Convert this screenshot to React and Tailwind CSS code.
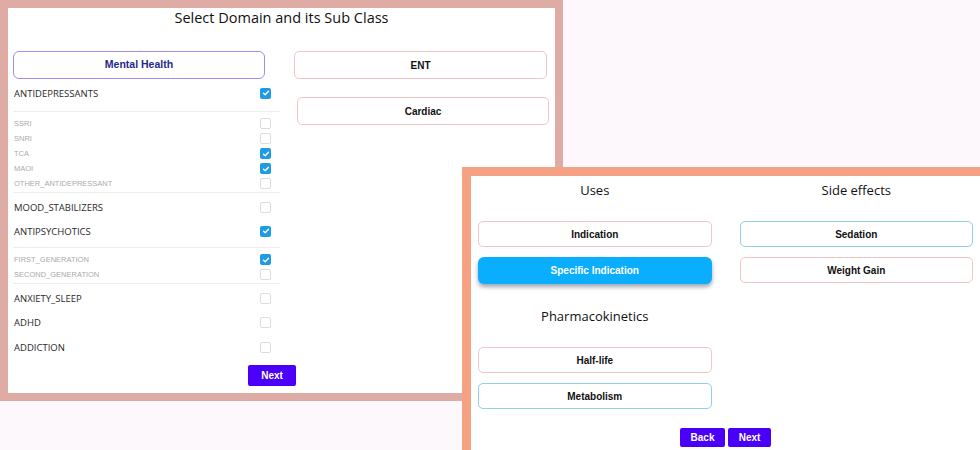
import React from "react";

const sans = { fontFamily: '"Open Sans", "Noto Sans", sans-serif' };

const antidepressants = [
  { name: "SSRI", on: false },
  { name: "SNRI", on: false },
  { name: "TCA", on: true },
  { name: "MAOI", on: true },
  { name: "OTHER_ANTIDEPRESSANT", on: false },
];

const antipsychotics = [
  { name: "FIRST_GENERATION", on: true },
  { name: "SECOND_GENERATION", on: false },
];

function Check({ on }) {
  if (!on) {
    return <span className="block w-[11px] h-[11px] rounded-[2px] border border-[#dcdcdc] bg-white" />;
  }
  return (
    <span className="flex w-[11px] h-[11px] rounded-[2px] bg-[#1d9be6] items-center justify-center">
      <svg width="8" height="8" viewBox="0 0 8 8">
        <path d="M1.5 4.2 L3.2 5.8 L6.5 2.2" fill="none" stroke="white" strokeWidth="1.4" strokeLinecap="round" strokeLinejoin="round" />
      </svg>
    </span>
  );
}

function MainRow({ label, on }) {
  return (
    <div className="flex items-center justify-between h-[24px] pl-[1px] pr-[9px]">
      <span className="text-[9.5px] text-[#2a2a2a] pt-[2px]" style={sans}>{label}</span>
      <Check on={on} />
    </div>
  );
}

function SubGroup({ items }) {
  return (
    <div className="border-y border-[#eeeeee] pt-[4px] pb-[1px]">
      {items.map((it) => (
        <div key={it.name} className="flex items-center justify-between h-[15px] pl-[1px] pr-[9px]">
          <span className="text-[7.5px] text-[#aaaaaa] font-['Liberation_Sans',Arial,sans-serif]">{it.name}</span>
          <Check on={it.on} />
        </div>
      ))}
    </div>
  );
}

function Outline({ children, tone, className = "" }) {
  const border = tone === "blue" ? "border-[#8fd0ec]" : "border-[#f5c4c6]";
  return (
    <div
      className={`flex items-center justify-center rounded-[5px] border bg-white text-[10px] font-bold text-[#111] font-['Liberation_Sans',Arial,sans-serif] ${border} ${className}`}
    >
      {children}
    </div>
  );
}

function DomainPanel() {
  return (
    <div className="absolute left-0 top-0 w-[563px] h-[401px] border-[8px] border-[#dfaca5] bg-white">
      <div className="h-[35px] flex items-start justify-center">
        <h1 className="text-[14.5px] leading-[20px] text-[#111]" style={sans}>Select Domain and its Sub Class</h1>
      </div>
      <div className="flex pl-[5px] mt-[8px]">
        {/* left column: selected domain with its sub classes */}
        <div className="w-[267px] shrink-0">
          <div className="h-[28px] w-[252px] rounded-[6px] border border-[#a48af0] flex items-center justify-center text-[10.5px] font-bold text-[#1e2a8c] font-['Liberation_Sans',Arial,sans-serif]">
            Mental Health
          </div>
          <div className="mt-[2px]">
            <MainRow label="ANTIDEPRESSANTS" on />
          </div>
          <div className="mt-[6px]">
            <SubGroup items={antidepressants} />
          </div>
          <div className="mt-[2px]">
            <MainRow label="MOOD_STABILIZERS" on={false} />
            <MainRow label="ANTIPSYCHOTICS" on />
          </div>
          <div className="mt-[4px]">
            <SubGroup items={antipsychotics} />
          </div>
          <div className="mt-[2px] flex flex-col gap-[0.5px]">
            <MainRow label="ANXIETY_SLEEP" on={false} />
            <MainRow label="ADHD" on={false} />
            <MainRow label="ADDICTION" on={false} />
          </div>
          <div className="mt-[6px] pl-[235px] flex">
            <button className="shrink-0 w-[48px] h-[21px] rounded-[2px] bg-[#4a00f8] text-white text-[10px] font-bold font-['Liberation_Sans',Arial,sans-serif]">
              Next
            </button>
          </div>
        </div>
        {/* right column: other domains */}
        <div className="ml-[14px] w-[255px]">
          <Outline className="h-[28px] w-[253px] text-[10.5px]">ENT</Outline>
          <Outline className="h-[28px] w-[252px] ml-[3px] mt-[18px] text-[10.5px]">Cardiac</Outline>
        </div>
      </div>
    </div>
  );
}

function Heading({ children }) {
  return (
    <div className="h-[26px] flex items-center justify-center text-[13px] text-[#111]" style={sans}>
      {children}
    </div>
  );
}

function AttributePanel() {
  return (
    <div className="absolute left-[462px] top-[167px] w-[527px] h-[300px] border-[9px] border-[#f4a283] bg-white">
      <div className="grid grid-cols-2 gap-x-[28px] px-[7px] pt-[2px]">
        <div className="flex flex-col">
          <Heading>Uses</Heading>
          <Outline className="h-[26px] mt-[17px]">Indication</Outline>
          <div className="h-[27px] mt-[10px] rounded-[6px] bg-[#0aaefc] shadow-[0_3px_4px_rgba(40,60,90,0.45)] flex items-center justify-center text-[10px] font-bold text-white font-['Liberation_Sans',Arial,sans-serif]">
            Specific Indication
          </div>
          <div className="mt-[20px]">
            <Heading>Pharmacokinetics</Heading>
          </div>
          <Outline className="h-[26px] mt-[17px]">Half-life</Outline>
          <Outline tone="blue" className="h-[26px] mt-[10px]">Metabolism</Outline>
        </div>
        <div className="flex flex-col">
          <Heading>Side effects</Heading>
          <Outline tone="blue" className="h-[26px] mt-[17px]">Sedation</Outline>
          <Outline className="h-[26px] mt-[10px]">Weight Gain</Outline>
        </div>
      </div>
      <div className="flex justify-center gap-[3px] mt-[19px]">
        <button className="w-[45px] h-[19px] rounded-[2px] bg-[#4a00f8] text-white text-[10px] font-bold font-['Liberation_Sans',Arial,sans-serif]">
          Back
        </button>
        <button className="w-[43px] h-[19px] rounded-[2px] bg-[#4a00f8] text-white text-[10px] font-bold font-['Liberation_Sans',Arial,sans-serif]">
          Next
        </button>
      </div>
    </div>
  );
}

export default function App() {
  return (
    <div className="relative w-[980px] h-[450px] overflow-hidden bg-[#fcf8fc]">
      <DomainPanel />
      <AttributePanel />
    </div>
  );
}
